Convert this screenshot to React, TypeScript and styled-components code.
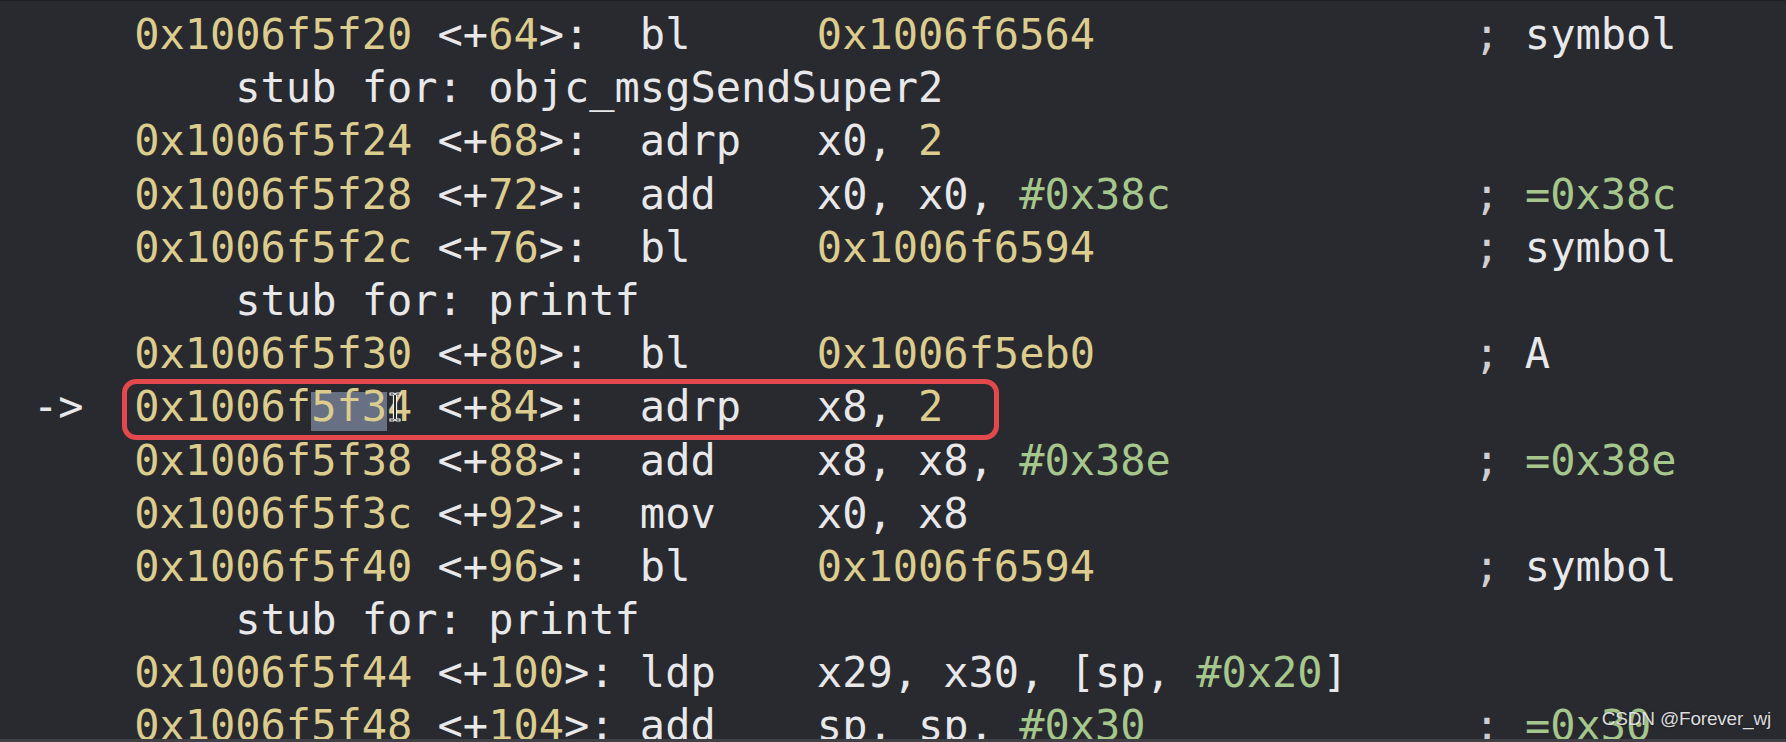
import React from "react";
import styled, { createGlobalStyle } from "styled-components";

const Global = createGlobalStyle`
  html, body { margin: 0; padding: 0; background: #292a2f; }
  body { overflow: hidden; }
`;

type Kind = "w" | "y" | "g" | "s";
type Tok = [string, Kind];

interface Line {
  arrow?: boolean;
  addr?: string;
  off?: string;
  op?: string;
  args?: Tok[];
  comment?: Tok[];
  note?: string;
  current?: boolean;
}

const C = {
  bg: "#292a2f",
  text: "#e8e8ea",
  num: "#dccd8e",
  imm: "#a5c78b",
  semi: "#cfcfd2",
};

const Screen = styled.div`
  position: relative;
  width: 1786px;
  height: 742px;
  box-sizing: border-box;
  overflow: hidden;
  background: ${C.bg};
  border-top: 1px solid #1f2024;
  border-bottom: 3px solid #3f4045;
`;

const Listing = styled.div`
  display: flex;
  flex-direction: column;
  padding: 7px 0 0 33px;
  font-family: "DejaVu Sans Mono", "Liberation Mono", monospace;
  font-size: 42px;
  line-height: 53.2px;
  color: ${C.text};
  white-space: pre;
`;

const Row = styled.div`
  position: relative;
  display: grid;
  grid-template-columns: 4ch 12ch 8ch 7ch 26ch 1fr;
  height: 53.2px;
`;

const Arrow = styled.span`
  color: ${C.text};
`;

const Note = styled.span`
  grid-column: 2 / -1;
  padding-left: 4ch;
`;

const Tk = styled.span<{ $k: Kind }>`
  color: ${(p) =>
    p.$k === "y" ? C.num : p.$k === "g" ? C.imm : p.$k === "s" ? C.semi : C.text};
`;

const Selected = styled.span`
  background: linear-gradient(
    to bottom,
    transparent 10px,
    rgba(128, 140, 164, 0.72) 10px,
    rgba(128, 140, 164, 0.72) 49px,
    transparent 49px
  );
`;

const Frame = styled.div`
  position: absolute;
  left: 89px;
  top: -1px;
  width: 877px;
  height: 61px;
  box-sizing: border-box;
  border: 5px solid #e3484d;
  border-radius: 14px;
  pointer-events: none;
`;

const Cursor = styled.svg`
  position: absolute;
  left: 355px;
  top: 11px;
  width: 14px;
  height: 32px;
`;

const Watermark = styled.div`
  position: absolute;
  right: 15px;
  top: 707px;
  font-family: "Liberation Sans", Arial, sans-serif;
  font-size: 19px;
  letter-spacing: -0.2px;
  color: rgba(240, 240, 242, 0.92);
  text-shadow: 0 0 2px rgba(0, 0, 0, 0.5);
`;

const sym: Tok[] = [[";", "s"], [" symbol", "w"]];
const eq = (v: string): Tok[] => [[";", "s"], [" ", "w"], [v, "g"]];

const lines: Line[] = [
  { addr: "0x1006f5f20", off: "64", op: "bl", args: [["0x1006f6564", "y"]], comment: sym },
  { note: "stub for: objc_msgSendSuper2" },
  { addr: "0x1006f5f24", off: "68", op: "adrp", args: [["x0, ", "w"], ["2", "y"]] },
  { addr: "0x1006f5f28", off: "72", op: "add", args: [["x0, x0, ", "w"], ["#0x38c", "g"]], comment: eq("=0x38c") },
  { addr: "0x1006f5f2c", off: "76", op: "bl", args: [["0x1006f6594", "y"]], comment: sym },
  { note: "stub for: printf" },
  { addr: "0x1006f5f30", off: "80", op: "bl", args: [["0x1006f5eb0", "y"]], comment: [[";", "s"], [" A", "w"]] },
  { arrow: true, current: true, addr: "0x1006f5f34", off: "84", op: "adrp", args: [["x8, ", "w"], ["2", "y"]] },
  { addr: "0x1006f5f38", off: "88", op: "add", args: [["x8, x8, ", "w"], ["#0x38e", "g"]], comment: eq("=0x38e") },
  { addr: "0x1006f5f3c", off: "92", op: "mov", args: [["x0, x8", "w"]] },
  { addr: "0x1006f5f40", off: "96", op: "bl", args: [["0x1006f6594", "y"]], comment: sym },
  { note: "stub for: printf" },
  { addr: "0x1006f5f44", off: "100", op: "ldp", args: [["x29, x30, [sp, ", "w"], ["#0x20", "g"], ["]", "w"]] },
  { addr: "0x1006f5f48", off: "104", op: "add", args: [["sp, sp, ", "w"], ["#0x30", "g"]], comment: eq("=0x30") },
];

const Toks: React.FC<{ t?: Tok[] }> = ({ t }) => (
  <span>
    {(t || []).map(([s, k], i) => (
      <Tk key={i} $k={k}>
        {s}
      </Tk>
    ))}
  </span>
);

const Address: React.FC<{ a: string; current?: boolean }> = ({ a, current }) => {
  if (!current) return <Tk $k="y">{a}</Tk>;
  return (
    <Tk $k="y">
      {a.slice(0, 7)}
      <Selected>{a.slice(7, 10)}</Selected>
      {a.slice(10)}
    </Tk>
  );
};

const IBeam = () => (
  <Cursor viewBox="0 0 14 32">
    <path
      d="M2 2 H5.5 L7 3.5 L8.5 2 H12 V4 H8.5 V28 H12 V30 H8.5 L7 28.5 L5.5 30 H2 V28 H5.5 V4 H2 Z"
      fill="#111"
      stroke="#f2f2f2"
      strokeWidth="1.2"
      strokeLinejoin="round"
    />
  </Cursor>
);

export default function App() {
  return (
    <Screen>
      <Global />
      <Listing>
        {lines.map((l, i) =>
          l.note ? (
            <Row key={i}>
              <span />
              <Note>{l.note}</Note>
            </Row>
          ) : (
            <Row key={i}>
              <Arrow>{l.arrow ? "->" : ""}</Arrow>
              <Address a={l.addr!} current={l.current} />
              <span>
                <Tk $k="w">{"<+"}</Tk>
                <Tk $k="y">{l.off}</Tk>
                <Tk $k="w">{">:"}</Tk>
              </span>
              <Tk $k="w">{l.op}</Tk>
              <Toks t={l.args} />
              <Toks t={l.comment} />
              {l.current && (
                <>
                  <Frame />
                  <IBeam />
                </>
              )}
            </Row>
          )
        )}
      </Listing>
      <Watermark>CSDN @Forever_wj</Watermark>
    </Screen>
  );
}
